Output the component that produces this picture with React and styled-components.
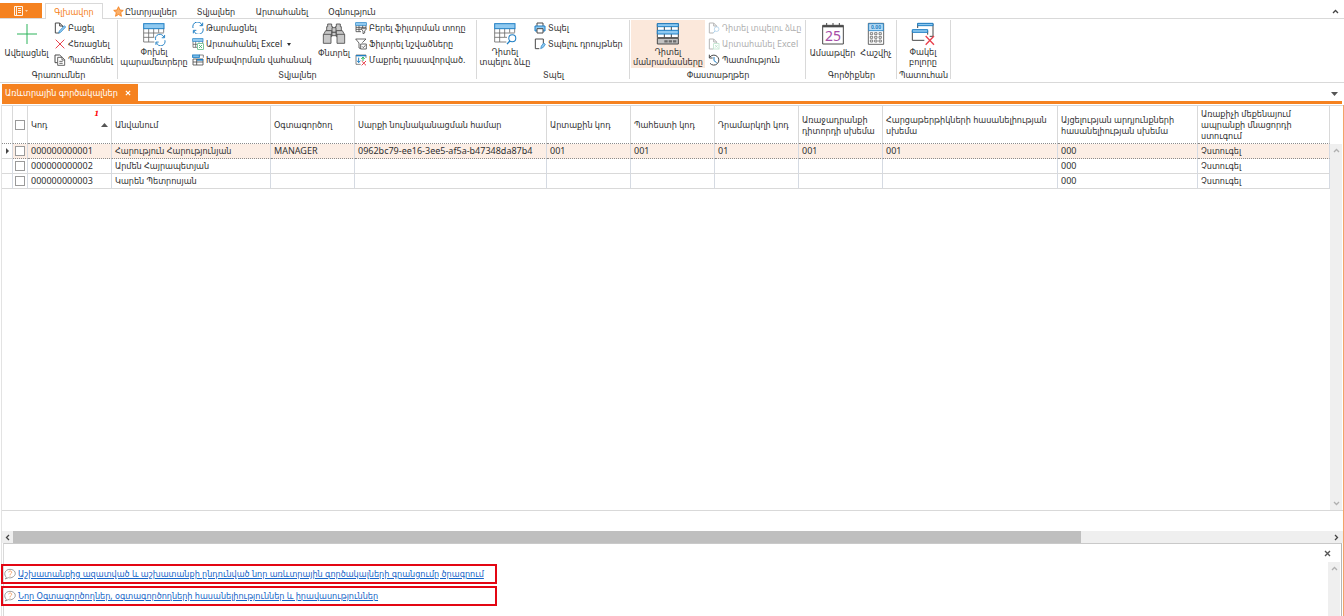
import React from "react";
import styled, { createGlobalStyle, css } from "styled-components";

const INK = "#303030";
const LINE = "#d9d9d9";
const ORANGE = "#f58220";

const Global = createGlobalStyle`
  *, *::before, *::after { box-sizing: border-box; }
  html, body { margin: 0; padding: 0; }
  body {
    background: #fff;
    color: ${INK};
    font-family: "Noto Sans", "DejaVu Sans Condensed", "DejaVu Sans", sans-serif;
    font-size: 9px;
    line-height: 10px;
  }
  button { font: inherit; color: inherit; background: none; border: 0; padding: 0; margin: 0; cursor: default; }
  svg { display: block; flex: none; }
`;

const Window = styled.div`
  display: flex;
  flex-direction: column;
  min-height: 100vh;
`;

/* ---------- ribbon tabs ---------- */
const TabStrip = styled.nav`
  display: flex;
  align-items: flex-end;
  height: 19px;
  padding-top: 3px;
  border-bottom: 1px solid ${LINE};
`;
const FileButton = styled.button`
  display: flex;
  align-items: center;
  justify-content: center;
  gap: 2px;
  width: 42px;
  height: 15px;
  margin-right: 3px;
  background: ${ORANGE};
`;
const RibbonTab = styled.button`
  display: flex;
  align-items: center;
  justify-content: center;
  gap: 1px;
  width: ${(p) => p.$w}px;
  height: 16px;
  margin-bottom: -1px;
  border: 1px solid transparent;
  border-bottom: 0;
  white-space: nowrap;
  ${(p) =>
    p.$active &&
    css`
      color: ${ORANGE};
      background: #fff;
      border-color: ${LINE};
    `}
`;
const Collapse = styled.button`
  margin-left: auto;
  padding: 0 5px 3px;
`;

/* ---------- ribbon body ---------- */
const Ribbon = styled.div`
  display: flex;
  height: 64px;
  padding: 1px 0 3px;
  border-bottom: 1px solid ${LINE};
`;
const GroupBox = styled.section`
  display: flex;
  flex-direction: column;
  width: ${(p) => p.$w}px;
  padding-left: ${(p) => p.$pad || 0}px;
  border-right: 1px solid ${LINE};
`;
const GroupBody = styled.div`
  display: flex;
  height: 48px;
`;
const Caption = styled.div`
  height: 12px;
  line-height: 14px;
  text-align: center;
  white-space: nowrap;
`;
const BigButton = styled.button`
  display: flex;
  flex-direction: column;
  align-items: center;
  width: ${(p) => p.$w}px;
  height: 48px;
  padding-top: 2px;
  font-family: "DejaVu Sans Condensed", "DejaVu Sans", sans-serif;
  white-space: nowrap;
  background: ${(p) => (p.$on ? "#fbe8db" : "none")};
  svg { margin-bottom: 1px; }
`;
const BigLabel = styled.span`
  display: block;
  padding-top: ${(p) => (p.$single ? 1 : 0)}px;
`;
const Stack = styled.div`
  display: flex;
  flex-direction: column;
  margin-left: ${(p) => p.$gap}px;
  width: ${(p) => p.$w}px;
`;
const SmallButton = styled.button`
  display: flex;
  align-items: center;
  gap: 2px;
  height: 16px;
  white-space: nowrap;
  opacity: ${(p) => (p.$off ? 0.4 : 1)};
`;
const Caret = styled.span`
  margin-left: 3px;
  border: 2px solid transparent;
  border-top: 3px solid ${INK};
  border-bottom: 0;
`;

/* ---------- document tabs ---------- */
const DocTabs = styled.div`
  display: flex;
  align-items: flex-end;
  height: 21px;
  margin: 0 2px;
  border-bottom: 3px solid ${ORANGE};
`;
const DocTab = styled.div`
  display: flex;
  align-items: center;
  justify-content: space-between;
  width: 136px;
  height: 17px;
  padding: 0 7px 0 3px;
  color: #fff;
  background: ${ORANGE};
  white-space: nowrap;
`;
const DocMenu = styled.button`
  margin: 0 0 5px auto;
  padding-right: 4px;
`;

/* ---------- data grid ---------- */
const Frame = styled.main`
  flex: 1;
  display: flex;
  flex-direction: column;
  margin-top: 1px;
  border-left: 1px solid #e3e3e3;
  margin-left: 1px;
  border-right: 1px solid #f2a469;
`;
const GridArea = styled.div`
  flex: 1;
  display: flex;
  padding-right: 1px;
  border-top: 1px solid ${LINE};
  border-bottom: 1px solid ${LINE};
`;
const GridPane = styled.div`
  flex: 1;
  min-width: 0;
`;
const Grid = styled.table`
  width: 100%;
  table-layout: fixed;
  border-collapse: separate;
  border-spacing: 0;
`;
const Th = styled.th`
  height: 38px;
  padding: 0 3px;
  font-weight: normal;
  text-align: left;
  line-height: 11px;
  white-space: nowrap;
  border-right: 1px solid ${LINE};
  border-bottom: 1px dotted #8c8c8c;
`;
const Td = styled.td`
  height: 15px;
  padding: 0 3px;
  line-height: 12px;
  white-space: nowrap;
  border-right: 1px solid #d5dae2;
  border-bottom: 1px solid ${LINE};
  ${(p) =>
    p.$focus &&
    css`
      background: #fceee5;
      border-bottom: 1px dotted #8c8c8c;
    `}
  ${(p) => p.$plain && css`background: #fff;`}
`;
const Center = styled.div`
  display: flex;
  justify-content: center;
  margin: 0 -3px;
`;
const Check = styled.input.attrs({ type: "checkbox" })`
  appearance: none;
  display: block;
  width: 10px;
  height: 10px;
  margin: 0;
  border: 1px solid #9a9a9a;
  background: #fff;
`;
const SortHead = styled.div`
  display: flex;
  align-items: center;
  justify-content: space-between;
`;
const SortMark = styled.span`
  display: flex;
  flex-direction: column;
  align-items: flex-end;
  height: 32px;
  color: #f00;
  font: italic bold 7px/9px "DejaVu Serif", serif;
  svg { margin-top: 5px; }
  b { padding-right: 9px; }
`;
const VScroll = styled.div`
  display: flex;
  flex-direction: column;
  justify-content: space-between;
  align-items: center;
  width: 12px;
  margin-top: ${(p) => p.$top || 0}px;
  padding: 3px 0;
  background: #efefef;
`;
const Footer = styled.div`
  height: 20px;
`;
const HScroll = styled.div`
  display: flex;
  align-items: center;
  height: 12px;
  padding-right: 1px;
  background: #efefef;
`;
const ScrollButton = styled.button`
  display: flex;
  justify-content: center;
  width: 11px;
`;
const Track = styled.div`
  flex: 1;
  height: 12px;
`;
const Thumb = styled.div`
  width: 81%;
  height: 12px;
  background: #bfbfbf;
`;

/* ---------- help panel ---------- */
const HelpPanel = styled.aside`
  display: flex;
  height: 73px;
  margin: 0 1px;
  border-top: 1px solid #c9c9c9;
  border-left: 1px solid ${LINE};
  border-right: 1px solid #b5b5b5;
`;
const HelpList = styled.ul`
  flex: 1;
  display: flex;
  flex-direction: column;
  gap: 2px;
  margin: 0 0 0 -3px;
  padding: 20px 0 0;
  list-style: none;
`;
const HelpItem = styled.li`
  display: flex;
  align-items: center;
  gap: 2px;
  width: 496px;
  height: 20px;
  padding-left: 1px;
  border: 2px solid #e30613;
  white-space: nowrap;
  a { color: #1665c8; text-decoration: underline; text-underline-offset: 1px; }
`;
const HelpSide = styled.div`
  display: flex;
  flex-direction: column;
  align-items: flex-end;
  width: 16px;
  margin-right: 1px;
`;
const HelpClose = styled.button`
  align-self: flex-start;
  height: 18px;
`;
const HelpScroll = styled(VScroll)`
  flex: 1;
`;

/* ---------- icons ---------- */
const D = "#4a4a4a";
const B = "#1f7fc4";
const LB = "#8fc9f0";

const Small = ({ children }) => (
  <svg width="12" height="12" viewBox="0 0 36 36" fill="none" stroke={D} strokeWidth="3">{children}</svg>
);
const Big = ({ children }) => (
  <svg width="24" height="24" viewBox="0 0 72 72" fill="none" stroke={D} strokeWidth="3">{children}</svg>
);
const Refresh = ({ x = 0, y = 0, s = 1 }) => (
  <g transform={`translate(${x} ${y}) scale(${s})`} stroke={B} fill="none">
    <path d="M3 18A14 14 0 0 1 30 10M32 2v9h-9M33 19A14 14 0 0 1 6 27M4 34v-9h9" />
  </g>
);
const Magnifier = ({ x, y, s = 1 }) => (
  <g transform={`translate(${x} ${y}) scale(${s})`} stroke={B}>
    <circle cx="17" cy="12" r="10" fill="#fff" />
    <path d="M10 20L2 29" strokeWidth="4" />
  </g>
);
const TableBase = () => (
  <>
    <path d="M5 20V60H40M20 20V60M35 20V45M50 20V32M65 20V32M5 33H65M5 46H42" stroke="#6b6b6b" strokeWidth="2.5" />
    <rect x="5" y="5" width="61" height="15" fill={LB} stroke={B} />
  </>
);
const PageIcon = () => <path d="M16 33H4V3h13l9 9v3M17 3v9h9" />;

const icons = {
  plus: <Big><path d="M36 6V66M6 36H66" stroke="#2db35a" /></Big>,
  edit: <Small><PageIcon /><path d="M31 11l4 4-15 16-6 2 2-6z" stroke={B} fill={LB} strokeWidth="2" /></Small>,
  remove: <Small><path d="M5 5L31 31M31 5L5 31" stroke="#e8414d" /></Small>,
  copy: <Small><path d="M10 26H3V3h14l7 7" /><path d="M11 10h14l7 7v17H11zM24 10v8h8M16 22h10M16 28h10" fill="#fff" strokeWidth="2.5" /></Small>,
  params: <Big><TableBase /><rect x="37" y="37" width="36" height="36" fill="#fff" stroke="none" /><Refresh x={38} y={37} s={0.93} /></Big>,
  refresh: <Small><Refresh /></Small>,
  excel: <Small><path d="M3 10V28H15M3 19H15M11 10V28M21 10v4M32 10v5" strokeWidth="2" /><rect x="2" y="2" width="31" height="8" fill={LB} stroke={B} strokeWidth="2" /><rect x="17" y="17" width="17" height="17" stroke="#3cae6b" strokeWidth="2" fill="#fff" /><path d="M21 21l9 9M30 21l-9 9" stroke="#3cae6b" strokeWidth="2.5" /></Small>,
  grouping: <Small><rect x="2" y="3" width="20" height="7" fill={LB} stroke={B} /><path d="M22 3h12v8" strokeWidth="2" /><path d="M3 15H33V33H3zM3 24H33M14 15V33" fill="#fff" strokeWidth="2.5" /><path d="M15 15h18v5H15z" fill={B} stroke="none" /></Small>,
  find: <Big><g fill="#c8c8c8" strokeWidth="2.5"><path d="M14 27V14h3V6h12v8h3v13zM40 27V14h3V6h12v8h3v13z" /><path d="M30 17h12v14H30z" /><path d="M6 35l5-9h18v18H6zM66 35l-5-9H43v18h23z" /><path d="M4 37h23v27H4zM45 37h23v27H45z" /><path d="M30 31h12v10H30z" /></g></Big>,
  filterRow: <Small><path d="M3 10V29H18M3 16H33M3 22H20M12 10V29M23 10v8M33 10v8" strokeWidth="2.5" /><rect x="2" y="2" width="32" height="8" fill={LB} stroke={B} strokeWidth="2" /><path d="M18 20H35L29 27v6l-5 2v-8z" fill="#fff" strokeWidth="2.5" /></Small>,
  filterSel: <Small><path d="M2 3H33L22 14M2 3L12 15V30l5 2" strokeWidth="2.5" /><path d="M17 18h17v15H17z" fill="#fff" strokeWidth="2.5" /><path d="M21 25l4 4 6-7" strokeWidth="2.5" /></Small>,
  clearSort: <Small><path d="M3 31V3H33V12M3 31H17" strokeWidth="2" /><path d="M3 5h30" stroke={B} strokeWidth="4" /><path d="M11 11v14M6 20l5 6 5-6" stroke={B} /><path d="M24 21V12M19 15l5-6 5 6" stroke="#2db35a" /><path d="M20 21l13 13M33 21L20 34" stroke="#e8414d" /></Small>,
  printView: <Big><TableBase /><rect x="44" y="36" width="28" height="36" fill="#fff" stroke="none" /><Magnifier x={40} y={36} s={1.05} /></Big>,
  print: <Small><path d="M9 12V3H27V12" fill="#fff" stroke={D} /><path d="M3 12H33V27H3z" fill={LB} stroke={B} /><path d="M9 20H27V33H9z" fill="#fff" /></Small>,
  printOpts: <Small><path d="M16 32H4V3h24v14" /><path d="M20 32l2-8 7-9 5 4-6 9z" fill={LB} stroke={B} strokeWidth="2" /></Small>,
  details: (
    <Big>
      <path d="M4 5H67V47H4z" fill="#fff" />
      <path d="M25 13V47M46 13V47" />
      <path d="M4 5H67V14H4z" fill={LB} stroke={B} />
      <path d="M4 25H67V36H4z" fill={LB} stroke={B} />
      <path d="M4 49H67V66H4z" fill="#c2c2c2" />
      <path d="M25 58H61" strokeWidth="7" strokeDasharray="10 3" stroke="#6a6a6a" />
    </Big>
  ),
  pageView: <Small><PageIcon /><Magnifier x={14} y={13} s={0.7} /></Small>,
  pageExcel: <Small><PageIcon /><rect x="17" y="17" width="16" height="16" stroke="#3cae6b" fill="#fff" strokeWidth="2" /><path d="M21 21l8 8M29 21l-8 8" stroke="#3cae6b" strokeWidth="2" /></Small>,
  history: <Small><path d="M5 10A15 15 0 1 1 6 28M4 2v10h10" /><path d="M18 9v11l8 6" stroke={B} /></Small>,
  calendar: (
    <Big><path d="M5 10H67V66H5z" fill="#fff" /><path d="M5 13H67" strokeWidth="6" /><path d="M17 3v8M36 3v8M55 3v8" /><text x="36" y="58" textAnchor="middle" fontSize="42" fontFamily="Noto Sans, sans-serif" fill="#a64ca6" stroke="none">25</text></Big>
  ),
  calculator: (
    <Big><path d="M13 4H59V67H13z" fill="#fff" strokeWidth="2.5" /><path d="M14 5H58V26H14z" fill="#b9def6" stroke={B} strokeWidth="2.5" /><text x="36" y="21" textAnchor="middle" fontSize="15" fontWeight="bold" fontFamily="Noto Sans, sans-serif" fill={B} stroke="none">0.00</text><g strokeWidth="2"><path d="M19 32h7v6h-7zM32 32h7v6h-7zM45 32h7v6h-7zM19 43h7v6h-7zM32 43h7v6h-7zM45 43h7v6h-7zM19 54h7v6h-7zM32 54h7v6h-7zM45 54h7v6h-7z" /></g></Big>
  ),
  closeAll: <Big><path d="M20 18V5H66V43H56" /><path d="M20 4H66V11H20z" fill={LB} stroke={B} /><path d="M4 26V55H40M50 26V38" /><path d="M4 23H50V31H4z" fill={LB} stroke={B} /><path d="M44 42l25 26M69 42L44 68" stroke="#e8414d" strokeWidth="4" /></Big>,
};

const Chevron = ({ dir, color = "#444" }) => {
  const turn = { up: 0, right: 90, down: 180, left: 270 }[dir];
  return (
    <svg width="7" height="7" viewBox="0 0 7 7" fill="none" stroke={color} strokeWidth="1.3">
      <path d="M1 5L3.5 2.5L6 5" transform={`rotate(${turn} 3.5 3.5)`} />
    </svg>
  );
};
const Cross = ({ color = "#555", size = 7 }) => (
  <svg width={size} height={size} viewBox="0 0 7 7" stroke={color} strokeWidth="1.4"><path d="M1 1l5 5M6 1L1 6" /></svg>
);
const Bubble = () => (
  <svg width="12" height="12" viewBox="0 0 36 36" fill="none" stroke="#8a8a8a" strokeWidth="2.5">
    <path d="M7 28C-2 20 2 4 18 4s21 15 10 22c-5 4-11 4-15 3l-9 4z" />
    <path d="M14 13c1-6 9-5 9 0 0 4-5 4-5 8M18 23v3" stroke="#f3a46b" strokeWidth="3" />
  </svg>
);

/* ---------- composition ---------- */
const Large = ({ icon, w, lines, on }) => (
  <BigButton $w={w} $on={on}>
    {icons[icon]}
    {lines.map((l) => (
      <BigLabel key={l} $single={lines.length === 1}>{l}</BigLabel>
    ))}
  </BigButton>
);
const Item = ({ icon, off, menu, children }) => (
  <SmallButton $off={off} disabled={off}>
    {icons[icon]}
    {children}
    {menu && <Caret />}
  </SmallButton>
);
const Group = ({ w, pad, title, children }) => (
  <GroupBox $w={w} $pad={pad}>
    <GroupBody>{children}</GroupBody>
    <Caption>{title}</Caption>
  </GroupBox>
);

const columns = [
  { w: 84, key: "code", lines: ["Կոդ"], sort: true },
  { w: 159, key: "name", lines: ["Անվանում"] },
  { w: 84, key: "user", lines: ["Օգտագործող"] },
  { w: 192, key: "device", lines: ["Սարքի նույնականացման համար"] },
  { w: 84, key: "ext", lines: ["Արտաքին կոդ"] },
  { w: 84, key: "store", lines: ["Պահեստի կոդ"] },
  { w: 84, key: "cash", lines: ["Դրամարկղի կոդ"] },
  { w: 84, key: "task", lines: ["Առաջադրանքի", "դիտորդի սխեմա"] },
  { w: 175, key: "survey", lines: ["Հարցաթերթիկների հասանելիության", "սխեմա"] },
  { w: 140, key: "visit", lines: ["Այցելության արդյունքների", "հասանելիության սխեմա"] },
  { key: "stock", lines: ["Առաքիչի մեքենայում", "ապրանքի մնացորդի", "ստուգում"] },
];
const rows = [
  { code: "000000000001", name: "Հարություն Հարությունյան", user: "MANAGER", device: "0962bc79-ee16-3ee5-af5a-b47348da87b4", ext: "001", store: "001", cash: "01", task: "001", survey: "001", visit: "000", stock: "Չստուգել" },
  { code: "000000000002", name: "Արմեն Հայրապետյան", visit: "000", stock: "Չստուգել" },
  { code: "000000000003", name: "Կարեն Պետրոսյան", visit: "000", stock: "Չստուգել" },
];
const helpLinks = [
  "Աշխատանքից ազատված և աշխատանքի ընդունված նոր առևտրային գործակալների գրանցումը ծրագրում",
  "Նոր Օգտագործողներ, օգտագործողների հասանելիություններ և իրավասություններ",
];

export default function App() {
  return (
    <Window>
      <Global />
      <TabStrip>
        <FileButton aria-label="Ֆայլ">
          <svg width="9" height="10" viewBox="0 0 9 10" fill="none">
            <path d="M.5.5h8v9h-8zM2.500.5v9M4 2.500h3M4 4.500h3M4 6.500h3" stroke="#fff3e6" />
          </svg>
          <svg width="3" height="2" viewBox="0 0 3 2"><path d="M0 0h3L1.500 2z" fill="#fbd0a8" /></svg>
        </FileButton>
        <RibbonTab $w={58} $active>Գլխավոր</RibbonTab>
        <RibbonTab $w={84}>
          <svg width="11" height="11" viewBox="0 0 30 30" fill="#fbb06a" stroke={ORANGE} strokeWidth="2.5">
            <path d="M15 2l4 9 9 1-7 6 2 10-8-5-8 5 2-10-7-6 9-1z" />
          </svg>
          Ընտրյալներ
        </RibbonTab>
        <RibbonTab $w={58}>Տվյալներ</RibbonTab>
        <RibbonTab $w={74}>Արտահանել</RibbonTab>
        <RibbonTab $w={66}>Օգնություն</RibbonTab>
        <Collapse aria-label="Թաքցնել"><Chevron dir="up" /></Collapse>
      </TabStrip>

      <Ribbon>
        <Group w={118} title="Գրառումներ">
          <Large icon="plus" w={53} lines={["Ավելացնել"]} />
          <Stack $gap={1} $w={62}>
            <Item icon="edit">Բացել</Item>
            <Item icon="remove">Հեռացնել</Item>
            <Item icon="copy">Պատճենել</Item>
          </Stack>
        </Group>
        <Group w={359} pad={1} title="Տվյալներ">
          <Large icon="params" w={70} lines={["Փոխել", "պարամետրերը"]} />
          <Stack $gap={3} $w={124}>
            <Item icon="refresh">Թարմացնել</Item>
            <Item icon="excel" menu>Արտահանել Excel</Item>
            <Item icon="grouping">Խմբավորման վահանակ</Item>
          </Stack>
          <Large icon="find" w={36} lines={["Փնտրել"]} />
          <Stack $gap={3} $w={118}>
            <Item icon="filterRow">Բերել ֆիլտրման տողը</Item>
            <Item icon="filterSel">Ֆիլտրել նշվածները</Item>
            <Item icon="clearSort">Մաքրել դասավորված.</Item>
          </Stack>
        </Group>
        <Group w={153} pad={1} title="Տպել">
          <Large icon="printView" w={54} lines={["Դիտել", "տպելու ձևը"]} />
          <Stack $gap={2} $w={94}>
            <Item icon="print">Տպել</Item>
            <Item icon="printOpts">Տպելու դրույթներ</Item>
          </Stack>
        </Group>
        <Group w={176} pad={1} title="Փաստաթղթեր">
          <Large icon="details" w={74} lines={["Դիտել", "մանրամասները"]} on />
          <Stack $gap={3} $w={97}>
            <Item icon="pageView" off>Դիտել տպելու ձևը</Item>
            <Item icon="pageExcel" off>Արտահանել Excel</Item>
            <Item icon="history">Պատմություն</Item>
          </Stack>
        </Group>
        <Group w={91} pad={1} title="Գործիքներ">
          <Large icon="calendar" w={51} lines={["Ամսաթվեր"]} />
          <Large icon="calculator" w={36} lines={["Հաշվիչ"]} />
        </Group>
        <Group w={54} title="Պատուհան">
          <Large icon="closeAll" w={52} lines={["Փակել", "բոլորը"]} />
        </Group>
      </Ribbon>

      <DocTabs>
        <DocTab>
          Առևտրային գործակալներ
          <button aria-label="Փակել"><Cross color="#fff" size={6} /></button>
        </DocTab>
        <DocMenu aria-label="Ցանկ">
          <svg width="7" height="4" viewBox="0 0 7 4"><path d="M0 0h7L3.500 4z" fill="#555" /></svg>
        </DocMenu>
      </DocTabs>

      <Frame>
        <GridArea>
          <GridPane>
            <Grid>
              <colgroup>
                <col width="11" />
                <col width="15" />
                {columns.map((c) => <col key={c.key} width={c.w} />)}
              </colgroup>
              <thead>
                <tr>
                  <Th />
                  <Th><Center><Check aria-label="Նշել բոլորը" /></Center></Th>
                  {columns.map((c) => (
                    <Th key={c.key}>
                      {c.sort ? (
                        <SortHead>
                          {c.lines[0]}
                          <SortMark>
                            <b>1</b>
                            <svg width="7" height="4" viewBox="0 0 7 4"><path d="M0 4h7L3.500 0z" fill="#555" /></svg>
                          </SortMark>
                        </SortHead>
                      ) : (
                        c.lines.map((l) => <div key={l}>{l}</div>)
                      )}
                    </Th>
                  ))}
                </tr>
              </thead>
              <tbody>
                {rows.map((r, i) => (
                  <tr key={r.code}>
                    <Td $plain>
                      {i === 0 && (
                        <Center><svg width="3" height="6" viewBox="0 0 3 6"><path d="M0 0v6L3 3z" fill="#444" /></svg></Center>
                      )}
                    </Td>
                    <Td $focus={i === 0}><Center><Check aria-label={r.name} /></Center></Td>
                    {columns.map((c) => <Td key={c.key} $focus={i === 0}>{r[c.key]}</Td>)}
                  </tr>
                ))}
              </tbody>
            </Grid>
          </GridPane>
          <VScroll $top={38}>
            <Chevron dir="up" color="#b0b0b0" />
            <Chevron dir="down" color="#b0b0b0" />
          </VScroll>
        </GridArea>
        <Footer />
        <HScroll>
          <ScrollButton aria-label="Ձախ"><Chevron dir="left" /></ScrollButton>
          <Track><Thumb /></Track>
          <ScrollButton aria-label="Աջ"><Chevron dir="right" /></ScrollButton>
        </HScroll>
        <HelpPanel>
          <HelpList>
            {helpLinks.map((t) => (
              <HelpItem key={t}><Bubble /><a href="#help">{t}</a></HelpItem>
            ))}
          </HelpList>
          <HelpSide>
            <HelpClose aria-label="Փակել"><Cross /></HelpClose>
            <HelpScroll><Chevron dir="up" color="#b0b0b0" /></HelpScroll>
          </HelpSide>
        </HelpPanel>
      </Frame>
    </Window>
  );
}
